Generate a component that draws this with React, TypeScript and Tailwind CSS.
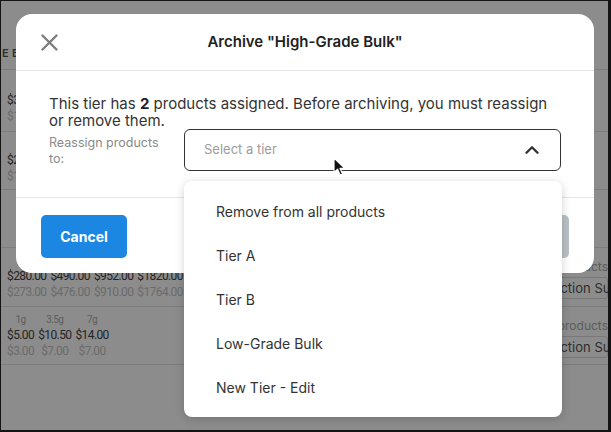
import { ChevronUp } from "lucide-react";

const TIERS = ["Remove from all products", "Tier A", "Tier B", "Low-Grade Bulk", "New Tier - Edit"];

const ROWS = [
  { h: "h-[62px]", weights: ["1g", "3.5g"], prices: ["$35.00", "$60.00"], costs: ["$14.00", "$28.00"], count: "", supplier: "" },
  { h: "h-[58px]", weights: ["1g", "3.5g"], prices: ["$25.00", "$45.00"], costs: ["$12.00", "$21.00"], count: "", supplier: "" },
  { h: "h-[58px]", weights: [], prices: [], costs: [], count: "", supplier: "" },
  {
    h: "h-[59px]",
    weights: ["28g", "56g", "112g", "224g"],
    prices: ["$280.00", "$490.00", "$952.00", "$1820.00"],
    costs: ["$273.00", "$476.00", "$910.00", "$1764.00"],
    count: "2 products",
    supplier: "Production Supplies",
  },
  {
    h: "h-[58px]",
    weights: ["1g", "3.5g", "7g"],
    prices: ["$5.00", "$10.50", "$14.00"],
    costs: ["$3.00", "$7.00", "$7.00"],
    count: "No products",
    supplier: "Production Supplies",
  },
];

function Cursor() {
  return (
    <svg width="14" height="20" viewBox="0 0 14 20" className="absolute left-[332px] top-[156px]">
      <path d="M1 1 L1 15.5 L4.6 12.2 L7.2 18 L9.6 17 L7 11.4 L11.8 11.4 Z" fill="#111" stroke="#fff" strokeWidth="1.2" strokeLinejoin="round" />
    </svg>
  );
}

export default function App() {
  return (
    <div
      className="relative h-[432px] w-[611px] overflow-hidden border-b-2 border-l border-r-[3px] border-t border-[#141414] bg-white"
      style={{ fontFamily: "Inter, 'Liberation Sans', sans-serif" }}
    >
      {/* Page behind the overlay */}
      <div className="flex flex-col">
        <div className="flex h-[69px] items-end border-b border-[#e4e4e4] pb-[8px] pl-[1px]">
          <span className="whitespace-nowrap text-[11px] font-semibold tracking-wide text-[#555]">E BREAKS</span>
        </div>
        {ROWS.map((r, i) => (
          <div key={i} className={`flex ${r.h} items-center border-b border-[#e4e4e4]`}>
            <div className="flex flex-1 gap-[4px] pl-[6px] font-['Roboto',sans-serif] tracking-[-0.6px]">
              {r.prices.map((p, j) => (
                <div key={j} className="flex flex-col items-center whitespace-nowrap">
                  <span className="text-[10px] leading-[14px] text-[#aaa]">{r.weights[j]}</span>
                  <span className="text-[12px] leading-[16px] text-[#444]">{p}</span>
                  <span className="text-[12px] leading-[16px] text-[#c4c4c4]">{r.costs[j]}</span>
                </div>
              ))}
            </div>
            {r.count && (
              <div className="flex w-[93px] shrink-0 flex-col gap-[3px] self-start pt-[12px]">
                <span className="whitespace-nowrap text-right text-[12px] leading-[14px] text-[#aaa]">{r.count}</span>
                <div className="whitespace-nowrap rounded-[3px] border border-[#ddd] px-[8px] text-[13px] leading-[20px] text-[#555]">
                  {r.supplier}
                </div>
              </div>
            )}
          </div>
        ))}
      </div>

      {/* Overlay */}
      <div className="absolute inset-0 bg-black/[0.45]" />

      {/* Modal */}
      <div className="absolute left-[15px] top-[13px] flex h-[259px] w-[578px] flex-col overflow-hidden rounded-[16px] bg-white">
        <div className="relative flex h-[57px] shrink-0 items-center justify-center border-b border-[#e6e6e6]">
          <svg width="17" height="17" viewBox="0 0 17 17" className="absolute left-[25px] top-[20px]">
            <path d="M1.5 1.5 L15.5 15.5 M15.5 1.5 L1.5 15.5" stroke="#7d7d7d" strokeWidth="2.4" strokeLinecap="round" />
          </svg>
          <h2 className="text-[15px] font-semibold text-[#222]">Archive "High-Grade Bulk"</h2>
        </div>

        <div className="flex h-[126px] shrink-0 flex-col px-[33px] pt-[24px]">
          <p className="text-[15px] leading-[17px] text-[#333]">
            This tier has <b className="font-bold text-[#222]">2</b> products assigned. Before archiving, you must reassign or remove them.
          </p>
          <div className="flex gap-[15px]">
            <label className="w-[120px] shrink-0 pt-[6px] text-[12.5px] leading-[16px] text-[#8a8a8a]">Reassign products to:</label>
            <div className="flex h-[42px] flex-1 items-center justify-between rounded-[6px] border border-[#333] pl-[19px] pr-[17px]">
              <span className="-mt-[1px] text-[13px] text-[#9c9c9c]">Select a tier</span>
              <ChevronUp size={22} strokeWidth={2.6} className="text-[#333]" />
            </div>
          </div>
        </div>

        <div className="flex flex-1 items-start justify-between border-t border-[#e6e6e6] px-[25px] pt-[17px]">
          <button className="h-[43px] w-[86px] rounded-[5px] bg-[#1c86e3] text-[14px] font-bold text-white">Cancel</button>
          <button className="h-[43px] w-[110px] rounded-[5px] bg-[#b9c0c6] text-[14px] font-bold text-white">Archive</button>
        </div>
      </div>

      {/* Open select menu */}
      <div className="absolute left-[183px] top-[180px] w-[378px] rounded-[8px] bg-white py-[8px] shadow-[0_2px_10px_rgba(0,0,0,0.18)]">
        {TIERS.map((t) => (
          <div key={t} className="flex h-[44px] items-center px-[32px] text-[14px] text-[#333]">
            {t}
          </div>
        ))}
      </div>

      <Cursor />
    </div>
  );
}
